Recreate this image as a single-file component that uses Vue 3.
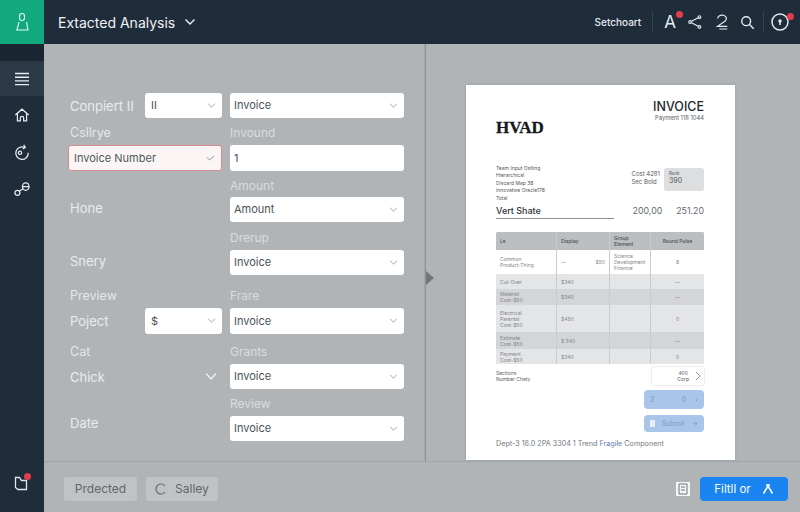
<script setup>
const railItems = [
  { id: 'home', d: 'M4 12l8-7 8 7M6.5 10.5V19h3.5v-3.5a2 2 0 0 1 4 0V19h3.5v-8.5' },
  { id: 'sync', d: 'M15 6.5a7.5 7.5 0 1 0 4.5 6.5M14 3.5l2 3-3 2M9.5 11a2 2 0 1 0 .1 0' },
  { id: 'link', d: 'M3.5 16.5a3 3 0 1 0 6 0a3 3 0 1 0-6 0M12.5 9a4 4.5 0 1 0 8 0a4 4.5 0 1 0-8 0M12.5 9h8M9 14.5l4-2.5' }
]

const formRows = [
  { label: 'Conpiert II', small: 'II', right: 'Invoice', rightCaption: '' },
  { caption: 'Csllrye', wide: 'Invoice Number', right: '1', rightCaption: 'Invound', plain: true },
  { label: 'Hone', right: 'Amount', rightCaption: 'Amount' },
  { label: 'Snery', right: 'Invoice', rightCaption: 'Drerup' },
  { caption: 'Preview', label: 'Poject', small: '$', right: 'Invoice', rightCaption: 'Frare' },
  { caption: 'Cat', label: 'Chick', check: true, right: 'Invoice', rightCaption: 'Grants' },
  { label: 'Date', right: 'Invoice', rightCaption: 'Review' }
]

const tableRows = [
  { a: 'Common\nProduct-Thing', b: '—', c: 'Science\nDevelopment\nFinance', d: '8', h: 24, tone: 'white', amt: '$50' },
  { a: 'Cut-Over', b: '$340', c: '', d: '—', h: 15, tone: 'light' },
  { a: 'Material\nCost-$50', b: '$340', c: '', d: '—', h: 16, tone: 'dark' },
  { a: 'Electrical\nParental\nCost-$50', b: '$450', c: '', d: '0', h: 27, tone: 'light' },
  { a: 'Estimate\nCost-$50', b: '$ 340', c: '', d: '—', h: 17, tone: 'dark' },
  { a: 'Payment\nCost-$50', b: '$340', c: '', d: '0', h: 15, tone: 'light' }
]
</script>

<template>
  <div class="app">
    <aside class="rail">
      <div class="brand">
        <svg width="24" height="24" viewBox="0 0 24 24" fill="none" stroke="#dffbf0" stroke-width="1.1">
          <path d="M9.5 6a2.5 2.5 0 0 1 5 0v2a2.5 2.5 0 0 1-5 0z" />
          <path d="M9 12l-2 8h11l-1.5-8M6 20h12.5" />
        </svg>
      </div>
      <div class="rail-gap"></div>
      <div class="rail-active">
        <svg width="18" height="18" viewBox="0 0 18 18" stroke="#e6ebef" stroke-width="1.4">
          <path d="M2 3.5h14M2 7.2h14M2 10.9h14M2 14.6h14" />
        </svg>
      </div>
      <div v-for="item in railItems" :key="item.id" class="rail-item">
        <svg width="20" height="20" viewBox="0 0 24 24" fill="none" stroke="#e6ebef" stroke-width="1.5">
          <path :d="item.d" />
        </svg>
      </div>
      <div class="rail-bottom">
        <svg width="20" height="20" viewBox="0 0 20 20" fill="none" stroke="#dfe5ea" stroke-width="1.3">
          <path d="M3.5 4.5h4l2 3h5v9H6l-2.5-2z" />
        </svg>
        <span class="rail-dot"></span>
      </div>
    </aside>

    <div class="body">
      <header class="top">
        <div class="title">
          <span>Extacted Analysis</span>
          <svg width="12" height="8" viewBox="0 0 12 8" fill="none" stroke="#eef2f5" stroke-width="1.4">
            <path d="M1.5 1.5L6 6l4.5-4.5" />
          </svg>
        </div>
        <div class="top-actions">
          <span class="top-link">Setchoart</span>
          <i class="sep"></i>
          <span class="letter">A<b class="badge"></b></span>
          <svg class="share" width="16" height="16" viewBox="0 0 18 18" fill="none" stroke="#e6ebef" stroke-width="1.3">
            <circle cx="3.5" cy="9" r="1.5" /><circle cx="14" cy="3.5" r="1.5" /><circle cx="14" cy="14.5" r="1.5" />
            <path d="M5 8.2l7.7-4M5 9.8l7.7 4" />
          </svg>
          <svg class="two" width="14" height="18" viewBox="0 0 16 20" fill="none" stroke="#e6ebef" stroke-width="1.4">
            <path d="M3 6a5 4 0 1 1 9 2.5L3 15h11M5 18h9" />
          </svg>
          <svg class="search" width="15" height="15" viewBox="0 0 17 17" fill="none" stroke="#e6ebef" stroke-width="1.6">
            <circle cx="7" cy="7" r="5" /><path d="M10.8 10.8L15.5 15.5" />
          </svg>
          <i class="sep second-sep"></i>
          <span class="help">
            <svg width="20" height="20" viewBox="0 0 20 20" fill="none" stroke="#e6ebef" stroke-width="1.5">
              <circle cx="10" cy="10" r="8" /><circle cx="10" cy="9" r="1" fill="#e6ebef" /><path d="M10 10v3" />
            </svg>
            <b class="badge"></b>
          </span>
        </div>
      </header>

      <main class="main">
        <section class="form">
          <div v-for="(row, i) in formRows" :key="i" class="form-row">
            <div class="caption-line">
              <span class="caption left-cap">{{ row.caption }}</span>
              <span class="caption">{{ row.rightCaption }}</span>
            </div>
            <div class="controls">
              <div v-if="row.wide" class="control wide">
                <span>{{ row.wide }}</span>
                <svg class="check-small" width="9" height="6" viewBox="0 0 9 6" fill="none" stroke="#8a8f94"><path d="M1 2.5L3.5 5 8 1" /></svg>
              </div>
              <div v-else class="left-cell" :class="{ last: i === formRows.length - 1 }">
                <span class="row-label">{{ row.label }}</span>
                <div v-if="row.small" class="control mini">
                  <span>{{ row.small }}</span>
                  <svg class="chev-svg" width="9" height="5" viewBox="0 0 10 6" fill="none" stroke="#8b949c"><path d="M1 1l4 4 4-4" /></svg>
                </div>
                <svg v-if="row.check" class="tick" width="12" height="9" viewBox="0 0 12 9" fill="none" stroke="#e9edf0" stroke-width="1.5"><path d="M1 1.5L6 7l5-5.5" /></svg>
              </div>
              <div class="control">
                <span>{{ row.right }}</span>
                <svg v-if="!row.plain" class="chev-svg" width="9" height="5" viewBox="0 0 10 6" fill="none" stroke="#8b949c"><path d="M1 1l4 4 4-4" /></svg>
              </div>
            </div>
          </div>
        </section>

        <section class="preview">
          <span class="handle"></span>
          <article class="doc">
            <div class="doc-head">
              <h2 class="doc-brand">HVAD</h2>
              <div class="doc-title">
                <strong>INVOICE</strong>
                <small>Payment 118 1044</small>
              </div>
            </div>
            <div class="doc-meta">
              <p class="address">Team Input Ostling<br>Hierarchical<br>Discard Map 38<br>Innovative Oracle178<br>Total</p>
              <div class="meta-right">
                <p class="meta-lines">Cost 4281<br>Sec Bold</p>
                <div class="meta-box"><small>Rank</small><span>390</span></div>
              </div>
            </div>
            <div class="doc-sum">
              <span class="sum-label">Vert Shate</span>
              <span class="sum-values"><span>200,00</span><span>251.20</span></span>
            </div>

            <div class="table">
              <div class="thead">
                <span>Le</span><span>Display</span><span>Group<br>Element</span><span class="center">Round Pulse</span>
              </div>
              <div
                v-for="(r, i) in tableRows"
                :key="i"
                class="tr"
                :class="r.tone"
                :style="{ height: r.h + 'px' }"
              >
                <span class="pre">{{ r.a }}</span>
                <span class="between">{{ r.b }}<em v-if="r.amt">{{ r.amt }}</em></span>
                <span class="pre">{{ r.c }}</span>
                <span class="center">{{ r.d }}</span>
              </div>
            </div>

            <div class="after-table">
              <p>Sections<br>Number Chaty</p>
              <div class="pager"><span>400<br>Corp</span><svg width="6" height="10" viewBox="0 0 6 10" fill="none" stroke="#8c9399"><path d="M1 1l4 4-4 4" /></svg></div>
            </div>
            <div class="doc-btn first"><span>2</span><span class="num">0</span><span>›</span></div>
            <div class="doc-btn second"><i></i><span>Submit</span><span>→</span></div>
            <p class="doc-foot">Dept-3 18.0 2PA 3304 1 Trend <span>Fragile</span> Component</p>
          </article>
        </section>
      </main>

      <footer class="foot">
        <div class="foot-left">
          <span class="ghost wide-ghost">Prdected</span>
          <span class="ghost">
            <svg width="12" height="12" viewBox="0 0 12 12" fill="none" stroke="#666d73" stroke-width="1.2"><path d="M10 3a5 5 0 1 0 0 6" /></svg>
            Salley
          </span>
        </div>
        <div class="foot-right">
          <span class="doc-icon">
            <svg width="12" height="12" viewBox="0 0 12 12" fill="none" stroke="#6b7278"><path d="M2 1h8v10H2zM4 4h4M4 7h4" /></svg>
          </span>
          <button class="primary">
            Filtll or
            <svg width="12" height="12" viewBox="0 0 12 12" fill="none" stroke="#fff" stroke-width="1.6"><path d="M1.5 10.5L6 3l4.5 7.5M4 2h4" /></svg>
          </button>
        </div>
      </footer>
    </div>
  </div>
</template>

<style scoped>
.app {
  display: flex;
  width: 800px;
  height: 512px;
  overflow: hidden;
  font-family: Inter, "Liberation Sans", sans-serif;
  background: #b0b4b7;
}
.rail {
  display: flex;
  flex-direction: column;
  width: 44px;
  flex: none;
  background: #1f2c3a;
}
.brand {
  display: flex;
  align-items: center;
  justify-content: center;
  height: 44px;
  background: #13a97e;
}
.rail-gap {
  height: 17px;
  background: #1a2632;
}
.rail-active {
  display: flex;
  align-items: center;
  justify-content: center;
  height: 35px;
  background: #2c3a48;
}
.rail-item {
  display: flex;
  align-items: center;
  justify-content: center;
  height: 37px;
}
.rail-bottom {
  position: relative;
  display: flex;
  justify-content: center;
  margin-top: auto;
  padding-bottom: 19px;
}
.rail-dot {
  position: absolute;
  top: 0;
  left: 24px;
  width: 7px;
  height: 7px;
  border-radius: 50%;
  background: #e23d4d;
}
.body {
  display: flex;
  flex: 1;
  flex-direction: column;
  min-width: 0;
}
.top {
  display: flex;
  align-items: center;
  justify-content: space-between;
  height: 44px;
  padding: 0 10px 0 14px;
  flex: none;
  box-sizing: border-box;
  background: #1f2c3a;
}
.title {
  display: flex;
  align-items: center;
  gap: 9px;
  color: #f0f3f5;
  font-size: 14px;
}
.top-actions {
  display: flex;
  align-items: center;
  color: #e6ebef;
}
.top-link {
  font-size: 10px;
  font-weight: 500;
}
.sep {
  width: 1px;
  height: 20px;
  margin-left: 11px;
  background: #35424f;
}
.second-sep {
  margin-left: 8px;
}
.letter {
  position: relative;
  margin-left: 11px;
  font-size: 17px;
}
.share {
  margin-left: 11px;
}
.two {
  margin-left: 12px;
}
.search {
  margin-left: 11px;
}
.badge {
  position: absolute;
  top: -1px;
  right: -7px;
  width: 7px;
  height: 7px;
  border-radius: 50%;
  background: #e23d4d;
}
.help {
  position: relative;
  display: flex;
  margin-left: 6px;
}
.help .badge {
  top: 1px;
  right: -4px;
}
.main {
  display: flex;
  flex: 1;
  min-height: 0;
}
.form {
  width: 382px;
  flex: none;
  box-sizing: border-box;
  padding: 49px 22px 0 24px;
  border-right: 1px solid #8e9499;
  box-shadow: inset -1px 0 0 #a2a7ab;
  display: flex;
  flex-direction: column;
}
.form-row .caption-line {
  display: grid;
  grid-template-columns: 154px 174px;
  gap: 8px;
  align-items: end;
  box-sizing: border-box;
  padding-bottom: 5px;
  color: #e9ecee;
}
.form-row:nth-child(1) .caption-line { height: 0; padding: 0; }
.form-row:nth-child(2) .caption-line { height: 27px; }
.form-row:nth-child(3) .caption-line { height: 26px; padding-bottom: 4px; }
.form-row:nth-child(4) .caption-line { height: 28px; }
.form-row:nth-child(5) .caption-line { height: 33px; }
.form-row:nth-child(6) .caption-line { height: 30px; }
.form-row:nth-child(7) .caption-line { height: 27px; }
.caption {
  font-size: 12px;
  color: #d8dcdf;
}
.left-cap {
  padding-left: 2px;
  color: #e4e7e9;
  font-size: 12.5px;
}
.controls {
  display: grid;
  grid-template-columns: 154px 174px;
  grid-template-rows: 25px;
  gap: 8px;
}
.form-row:nth-child(2) .controls,
.form-row:nth-child(5) .controls {
  grid-template-rows: 26px;
}
.left-cell {
  display: flex;
  align-items: center;
  justify-content: space-between;
  padding-left: 2px;
}
.form-row:nth-child(3) .left-cell,
.form-row:nth-child(4) .left-cell {
  padding-bottom: 3px;
}
.left-cell.last .row-label {
  margin-top: -12px;
}
.row-label {
  font-size: 13px;
  color: #e9ecee;
}
.control {
  display: flex;
  align-items: center;
  justify-content: space-between;
  box-sizing: border-box;
  padding: 0 6px 1px 4px;
  background: #fff;
  border-radius: 3px;
  color: #4a5259;
  font-size: 11px;
}
.mini {
  align-self: stretch;
  width: 77px;
  padding-left: 6px;
}
.wide {
  padding-left: 5px;
  background: #fbf6f5;
  border: 1px solid #d98a8a;
  color: #4f565c;
}
.tick {
  margin-right: 5px;
}
.preview {
  position: relative;
  flex: 1;
  padding-top: 41px;
  padding-left: 40px;
  overflow: hidden;
}
.handle {
  position: absolute;
  left: 0;
  top: 227px;
  width: 0;
  height: 0;
  border-top: 7px solid transparent;
  border-bottom: 7px solid transparent;
  border-left: 8px solid #71777c;
}
.doc {
  width: 269px;
  height: 375px;
  box-sizing: border-box;
  padding: 14px 31px 0 30px;
  background: #fff;
  box-shadow: 0 0 3px rgba(90, 95, 100, 0.3);
  color: #555b60;
}
.doc-head {
  display: flex;
  justify-content: space-between;
  height: 50px;
}
.doc-brand {
  margin: 19px 0 0;
  font-family: "Liberation Serif", serif;
  font-size: 17px;
  font-weight: 700;
  color: #16191c;
  -webkit-text-stroke: 0.3px #16191c;
}
.doc-title {
  display: flex;
  flex-direction: column;
  align-items: flex-end;
}
.doc-title strong {
  font-size: 12.5px;
  font-weight: 500;
  color: #24282c;
}
.doc-title small {
  margin-top: 0;
  font-size: 5.8px;
}
.doc-meta {
  display: flex;
  justify-content: space-between;
  height: 40px;
  margin-top: 16px;
}
.address {
  margin: 0;
  font-size: 5px;
  line-height: 7.4px;
  color: #50565b;
}
.meta-right {
  display: flex;
  gap: 4px;
  margin-top: 3px;
}
.meta-lines {
  margin: 2px 0 0;
  font-size: 6px;
  line-height: 8px;
}
.meta-box {
  display: flex;
  flex-direction: column;
  width: 40px;
  height: 23px;
  box-sizing: border-box;
  padding: 3px 5px;
  border-radius: 3px;
  background: #dcdedf;
  font-size: 7px;
}
.meta-box small {
  font-size: 4.5px;
}
.doc-sum {
  display: flex;
  justify-content: space-between;
  align-items: baseline;
}
.sum-label {
  display: block;
  width: 118px;
  padding-bottom: 2px;
  border-bottom: 1px solid #8d9296;
  font-size: 9px;
  font-weight: 500;
  color: #2f3438;
}
.sum-values {
  display: flex;
  gap: 14px;
  font-size: 8.8px;
  color: #62686d;
}
.table {
  margin-top: 13px;
  width: 208px;
  background: #e4e5e6;
  font-size: 5px;
  color: #7f858a;
}
.thead, .tr {
  display: grid;
  grid-template-columns: 61px 53px 41px 53px;
  box-sizing: border-box;
}
.thead {
  height: 18px;
  border-radius: 2px 2px 0 0;
  background: #bcbfc1;
  color: #4a5055;
  font-weight: 500;
}
.thead span, .tr span {
  display: flex;
  align-items: center;
  padding: 0 4px;
  border-right: 1px solid #c9cbcd;
  line-height: 6px;
}
.thead span:last-child, .tr span:last-child {
  border-right: none;
}
.tr.white { background: #fff; }
.tr.light { background: #e4e5e6; }
.tr.dark { background: #d3d5d6; }
.tr span.pre {
  white-space: pre-line;
}
.tr span.between {
  justify-content: space-between;
}
.tr em {
  font-style: normal;
}
.thead span.center, .tr span.center {
  justify-content: center;
}
.after-table {
  display: flex;
  justify-content: space-between;
  margin-top: 3px;
  height: 18px;
  font-size: 5px;
  line-height: 6px;
}
.after-table p {
  margin: 3px 0 0;
  color: #5b6166;
}
.pager {
  display: flex;
  align-items: center;
  justify-content: flex-end;
  gap: 6px;
  width: 52px;
  box-sizing: border-box;
  padding-right: 3px;
  text-align: center;
  border-radius: 2px;
  box-shadow: 0 0 2px rgba(100, 105, 110, 0.4);
}
.doc-btn {
  display: flex;
  align-items: center;
  margin-left: 148px;
  width: 60px;
  box-sizing: border-box;
  padding: 0 6px;
  border-radius: 4px;
  background: #a9c5ea;
  color: #7d9cc6;
  font-size: 7px;
  justify-content: space-between;
}
.first {
  height: 19px;
  margin-top: 5px;
}
.first .num {
  margin-left: 18px;
}
.second {
  height: 17px;
  margin-top: 6px;
}
.second i {
  width: 5px;
  height: 7px;
  background: #e7eef8;
}
.doc-foot {
  margin: 7px 0 0;
  font-size: 7.2px;
  white-space: nowrap;
  color: #72787d;
}
.doc-foot span {
  color: #5e7fae;
}
.foot {
  display: flex;
  align-items: center;
  justify-content: space-between;
  height: 51px;
  flex: none;
  box-sizing: border-box;
  padding: 3px 12px 0 20px;
  border-top: 1px solid #a0a5a8;
  background: #b0b4b7;
}
.foot-left {
  display: flex;
  gap: 9px;
}
.ghost {
  display: flex;
  align-items: center;
  justify-content: center;
  gap: 8px;
  width: 72px;
  height: 24px;
  border-radius: 3px;
  background: #c0c3c5;
  color: #60676c;
  font-size: 12px;
}
.wide-ghost {
  width: 73px;
}
.foot-right {
  display: flex;
  align-items: center;
  gap: 10px;
}
.doc-icon {
  display: flex;
  align-items: center;
  justify-content: center;
  width: 14px;
  height: 14px;
  background: #f4f5f6;
}
.primary {
  display: flex;
  align-items: center;
  justify-content: center;
  gap: 11px;
  width: 88px;
  height: 24px;
  padding: 0;
  border: none;
  border-radius: 4px;
  background: #1a85f0;
  color: #fff;
  font-family: inherit;
  font-size: 11.5px;
}
</style>
